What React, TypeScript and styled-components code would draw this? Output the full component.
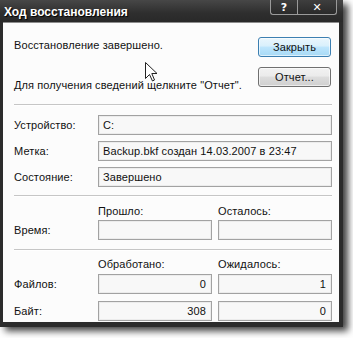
import React from "react";
import styled, { createGlobalStyle } from "styled-components";

const Global = createGlobalStyle`
  html, body { margin: 0; padding: 0; background: #ffffff; }
  body { font-family: "Liberation Sans", Arial, sans-serif; color: #111; }
`;

const Page = styled.div`
  position: relative;
  width: 353px;
  height: 338px;
  overflow: hidden;
  background: #ffffff;
`;

const Window = styled.div`
  width: 343px;
  height: 327px;
  display: flex;
  flex-direction: column;
  background: #2c2c2c;
  box-shadow: 5px 4px 7px rgba(0, 0, 0, 0.75);
`;

const TitleBar = styled.div`
  height: 22px;
  flex: none;
  display: flex;
  justify-content: space-between;
  align-items: flex-start;
  background: linear-gradient(#474747, #2e2e2e 60%, #292929);
`;

const TitleText = styled.div`
  align-self: center;
  padding: 2px 0 0 4px;
  color: #ffffff;
  font-family: "Liberation Sans", Arial, sans-serif;
  font-weight: bold;
  font-size: 12px;
  text-shadow: 1px 1px 1px #000;
`;

const TitleButtons = styled.div`
  display: flex;
  margin-right: 6px;
`;

const TitleButton = styled.div<{ $w: number }>`
  width: ${(p) => p.$w}px;
  height: 15px;
  box-sizing: border-box;
  display: flex;
  align-items: center;
  justify-content: center;
  border: 1px solid #9a9a9a;
  border-top: none;
  background: linear-gradient(#3e3e3e, #2a2a2a);
  color: #ffffff;
  font-family: "DejaVu Sans", sans-serif;
  font-weight: bold;
  font-size: 11px;
  &:first-child { border-bottom-left-radius: 3px; border-right: none; }
  &:last-child { border-bottom-right-radius: 3px; }
`;

const Frame = styled.div`
  flex: 1;
  display: flex;
  padding: 0 4px 5px 3px;
`;

const Body = styled.div`
  flex: 1;
  box-sizing: border-box;
  background: #fcfcfc;
  border-top: 1px solid #8d8d8d;
  padding: 0 7px 0 11px;
  display: flex;
  flex-direction: column;
  font-size: 11px;
  letter-spacing: 0.1px;
`;

const TopSection = styled.div`
  display: flex;
  justify-content: space-between;
  padding: 14px 1px 12px 0;
`;

const Messages = styled.div`
  display: flex;
  flex-direction: column;
  gap: 26px;
  padding-top: 1px;
`;

const Text = styled.div`
  line-height: 14px;
  white-space: nowrap;
`;

const Buttons = styled.div`
  display: flex;
  flex-direction: column;
  gap: 10px;
`;

const Button = styled.div<{ $primary?: boolean }>`
  width: 73px;
  height: 20px;
  box-sizing: border-box;
  display: flex;
  align-items: center;
  justify-content: center;
  border-radius: 3px;
  border: 1px solid ${(p) => (p.$primary ? "#3c7fb1" : "#707070")};
  background: ${(p) =>
    p.$primary
      ? "linear-gradient(#eaf6fd, #d9f0fc 45%, #bee6fd 50%, #a7d9f5)"
      : "linear-gradient(#f2f2f2, #ebebeb 45%, #dddddd 50%, #cfcfcf)"};
  box-shadow: inset 0 0 0 1px rgba(255, 255, 255, 0.6);
`;

const Separator = styled.div`
  height: 1px;
  flex: none;
  background: #c6c6c6;
  box-shadow: 0 1px 0 #ffffff;
`;

const Grid = styled.div<{ $cols: string; $gap: number; $pt: number; $pb: number }>`
  display: grid;
  grid-template-columns: ${(p) => p.$cols};
  column-gap: 6px;
  row-gap: ${(p) => p.$gap}px;
  align-items: center;
  padding: ${(p) => p.$pt}px 0 ${(p) => p.$pb}px 0;
`;

const Label = styled.div`
  line-height: 14px;
  white-space: nowrap;
`;

const ColHeader = styled.div<{ $mb: number }>`
  line-height: 14px;
  white-space: nowrap;
  margin-bottom: ${(p) => p.$mb}px;
`;

const Field = styled.div<{ $right?: boolean }>`
  height: 20px;
  box-sizing: border-box;
  border: 1px solid #a2a2a2;
  box-shadow: inset 0 0 0 1px #ececec;
  background: #f8f8f8;
  padding: 0 5px 0 4px;
  line-height: 18px;
  white-space: nowrap;
  text-align: ${(p) => (p.$right ? "right" : "left")};
`;

const Cursor = styled.svg`
  position: absolute;
  left: 145px;
  top: 62px;
`;

export default function App() {
  return (
    <Page>
      <Global />
      <Window>
        <TitleBar>
          <TitleText>Ход восстановления</TitleText>
          <TitleButtons>
            <TitleButton $w={27}>?</TitleButton>
            <TitleButton $w={40}>✕</TitleButton>
          </TitleButtons>
        </TitleBar>
        <Frame>
          <Body>
            <TopSection>
              <Messages>
                <Text>Восстановление завершено.</Text>
                <Text>Для получения сведений щелкните "Отчет".</Text>
              </Messages>
              <Buttons>
                <Button $primary>Закрыть</Button>
                <Button>Отчет...</Button>
              </Buttons>
            </TopSection>
            <Separator />
            <Grid $cols="78px 1fr" $gap={6} $pt={10} $pb={8}>
              <Label>Устройство:</Label>
              <Field>C:</Field>
              <Label>Метка:</Label>
              <Field>Backup.bkf создан 14.03.2007 в 23:47</Field>
              <Label>Состояние:</Label>
              <Field>Завершено</Field>
            </Grid>
            <Separator />
            <Grid $cols="78px 1fr 1fr" $gap={2} $pt={8} $pb={9}>
              <span />
              <ColHeader $mb={0}>Прошло:</ColHeader>
              <ColHeader $mb={0}>Осталось:</ColHeader>
              <Label>Время:</Label>
              <Field />
              <Field />
            </Grid>
            <Separator />
            <Grid $cols="78px 1fr 1fr" $gap={7} $pt={7} $pb={0}>
              <span />
              <ColHeader $mb={-4}>Обработано:</ColHeader>
              <ColHeader $mb={-4}>Ожидалось:</ColHeader>
              <Label>Файлов:</Label>
              <Field $right>0</Field>
              <Field $right>1</Field>
              <Label>Байт:</Label>
              <Field $right>308</Field>
              <Field $right>0</Field>
            </Grid>
          </Body>
        </Frame>
      </Window>
      <Cursor width="13" height="20" viewBox="0 0 13 20">
        <path
          d="M0.5 0.5 L0.5 16.5 L4.5 12.5 L7.5 19 L9.5 18 L6.8 11.5 L12 11.5 Z"
          fill="#ffffff"
          stroke="#222"
          strokeWidth="1"
          strokeLinejoin="round"
        />
      </Cursor>
    </Page>
  );
}
